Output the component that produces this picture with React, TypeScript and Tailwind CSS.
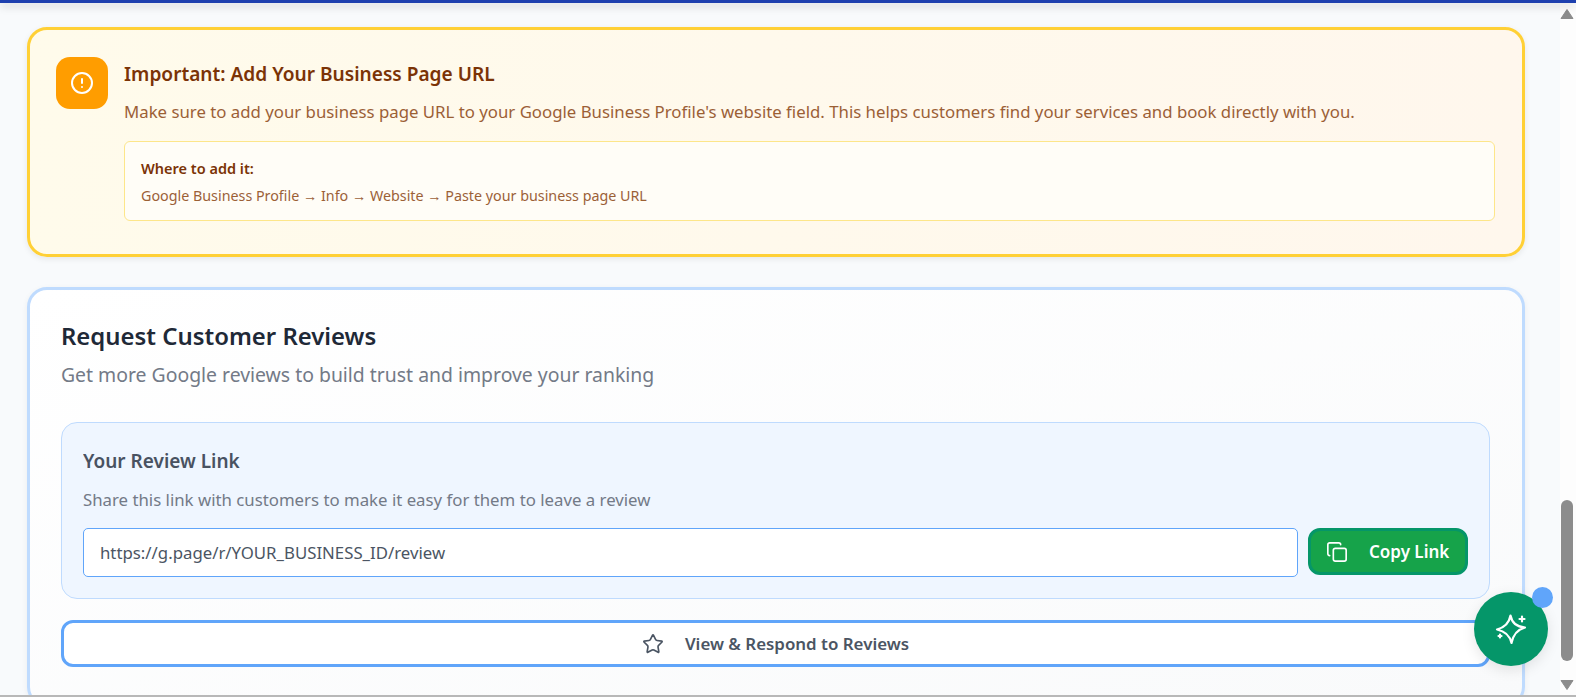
import { Star, Copy, CircleAlert } from "lucide-react";

export default function App() {
  return (
    <div className="relative h-[697px] w-[1576px] overflow-hidden bg-[#fdfdfd] font-['Noto_Sans','Open_Sans',sans-serif] flex flex-col">
      <div className="h-[3px] shrink-0 bg-[#1e40af] shadow-[0_3px_8px_rgba(0,0,0,0.22)] relative z-10" />
      <div className="flex flex-1 min-h-0">
        <main className="w-[1560px] shrink-0 bg-[#f8fafc] pl-[27px] pr-[35px] pt-[24px] overflow-hidden">
          <section className="h-[230px] rounded-[20px] border-[3px] border-[#ffd036] bg-gradient-to-r from-[#fffbeb] to-[#fff7ed] pl-[26px] pr-[27px] pt-[27px] flex gap-[16px] shadow-[0_2px_6px_rgba(0,0,0,0.08)]">
            <div className="w-[52px] h-[52px] shrink-0 rounded-[14px] bg-[#ff9d00] flex items-center justify-center">
              <CircleAlert className="w-[24px] h-[24px] text-white" strokeWidth={2} />
            </div>
            <div className="flex-1 min-w-0">
              <h2 className="text-[19.1px] leading-[26px] font-semibold text-[#7b3306] mt-[4px]">Important: Add Your Business Page URL</h2>
              <p className="text-[16.8px] leading-[26px] text-[#8b4513] opacity-85 mt-[12px]">
                Make sure to add your business page URL to your Google Business Profile's website field. This helps customers find your services and book directly with you.
              </p>
              <div className="mt-[16px] h-[80px] rounded-[6px] border border-[#fde68a] bg-[#fffdf7] pl-[16px] pt-[16px]">
                <div className="text-[14.5px] leading-[20px] font-semibold text-[#7b3306]">Where to add it:</div>
                <div className="text-[14.3px] leading-[20px] text-[#8b4513] opacity-85 mt-[8px]">Google Business Profile → Info → Website → Paste your business page URL</div>
              </div>
            </div>
          </section>
          <section className="mt-[30px] h-[420px] rounded-[20px] border-[3px] border-[#bfdbfe] bg-gradient-to-br from-white to-[#f9fafb] pl-[31px] pr-[32px] pt-[30px] shadow-[0_2px_6px_rgba(0,0,0,0.06)]">
            <h2 className="text-[23.9px] leading-[32px] font-semibold text-[#1f2937]">Request Customer Reviews</h2>
            <p className="text-[19.4px] leading-[28px] text-[#737a87] mt-[9px]">Get more Google reviews to build trust and improve your ranking</p>
            <div className="mt-[33px] h-[177px] rounded-[16px] border border-[#bfdbfe] bg-[#eff6ff] px-[21px] pt-[22px]">
              <h3 className="text-[19px] leading-[32px] font-semibold text-[#374151] opacity-90">Your Review Link</h3>
              <p className="text-[16.8px] leading-[24px] text-[#737a87] mt-[11px]">Share this link with customers to make it easy for them to leave a review</p>
              <div className="flex gap-[10px] mt-[16px]">
                <div className="flex-1 h-[49px] rounded-[5px] border border-[#60a5fa] bg-white pl-[16px] flex items-center text-[16.8px] text-[#4b5563]">https://g.page/r/YOUR_BUSINESS_ID/review</div>
                <button className="w-[160px] h-[47px] rounded-[12px] border-[3px] border-[#059669] bg-[#16a34a] text-white text-[17px] font-semibold flex items-center pl-[15px]">
                  <Copy className="w-[22px] h-[22px] mr-[21px]" strokeWidth={1.8} />
                  Copy Link
                </button>
              </div>
            </div>
            <button className="mt-[21px] w-full h-[47px] rounded-[12px] border-[3px] border-[#60a5fa] bg-white flex items-center justify-center text-[16.9px] font-semibold text-[#4b5563]">
              <Star className="w-[22px] h-[22px] mr-[21px]" strokeWidth={1.8} />
              View &amp; Respond to Reviews
            </button>
          </section>
        </main>
        <aside className="relative flex-1">
          <div className="absolute left-[1px] top-[497px] w-[12px] h-[161px] rounded-full bg-[#8c8c8c]" />
          <svg className="absolute left-0 top-[5px]" width="14" height="12" viewBox="0 0 14 12"><path d="M7 1.5 L13 10.5 H1 Z" fill="#8c8c8c" stroke="#8c8c8c" strokeLinejoin="round" /></svg>
          <svg className="absolute left-0 top-[676px]" width="14" height="12" viewBox="0 0 14 12"><path d="M1 1.5 H13 L7 10.5 Z" fill="#8c8c8c" stroke="#8c8c8c" strokeLinejoin="round" /></svg>
        </aside>
      </div>
      <div className="h-[2px] shrink-0 bg-[#b8b8b8]" />
      <div className="absolute left-[1474px] top-[592px] w-[74px] h-[74px] rounded-full bg-[#059669] flex items-center justify-center shadow-[0_4px_14px_rgba(0,0,0,0.1)]">
        <svg width="32" height="32" viewBox="0 0 32 32" fill="none" stroke="#fff" strokeWidth="2.2" strokeLinejoin="round" strokeLinecap="round">
          <path d="M15.5 2.5 Q17.5 13.5 30 14.5 Q19 17.5 16.5 30 Q14 19 2 16.5 Q13.5 13.5 15.5 2.5 Z" />
          <path d="M27 3.5 V8.5 M24.5 6 H29.5" />
          <path d="M5 21.5 V24.5 M3.5 23 H6.5" />
        </svg>
      </div>
      <div className="absolute left-[1532px] top-[587px] w-[21px] h-[21px] rounded-full bg-[#60a5fa]" />
    </div>
  );
}
